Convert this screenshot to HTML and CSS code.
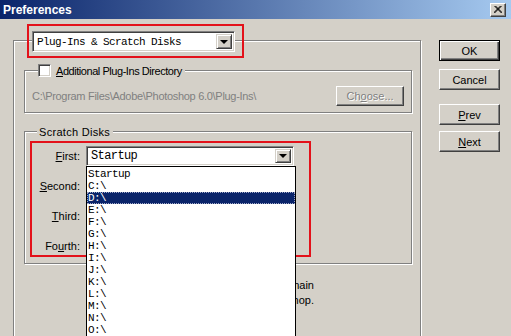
FILE: index.html
```html
<!DOCTYPE html>
<html>
	<head>
		<meta charset="UTF-8">
		<title>Preferences</title>
		<link rel="stylesheet" href="styles.css">
	</head>
	<body>
		<div id="window">
			<div class="titlebar">
				<span class="title">Preferences</span>
				<span class="close">
					<svg width="8" height="7" viewBox="0 0 8 7"><path d="M0.5 0 L7.5 7 M1.5 0 L8.5 7 M7.5 0 L0.5 7 M6.5 0 L-0.5 7" stroke="#000" stroke-width="1" fill="none" /></svg>
				</span>
			</div>
			<div class="client">
				<div class="main">
					<div class="mark pane-mark">
						<div class="combo pane-combo">
							<span class="combo-text">Plug-Ins &amp; Scratch Disks</span>
							<span class="combo-btn"><i></i></span>
						</div>
					</div>
					<div class="frame">
						<div class="group plugins">
							<div class="legend"><span class="check"></span><span class="check-label"><u>A</u>dditional Plug-Ins Directory</span></div>
							<div class="path-row">
								<span class="path">C:\Program Files\Adobe\Photoshop 6.0\Plug-Ins\</span>
								<span class="btn disabled">Ch<u>o</u>ose...</span>
							</div>
						</div>
						<div class="group disks">
							<div class="legend">Scratch Disks</div>
							<div class="mark disk-mark">
								<div class="disk-row first">
									<span class="disk-label"><u>F</u>irst:</span>
									<div class="combo disk-combo">
										<span class="combo-text">Startup</span>
										<span class="combo-btn"><i></i></span>
									</div>
									<ul class="droplist">
										<li>Startup</li>
										<li>C:\</li>
										<li class="selected">D:\</li>
										<li>E:\</li>
										<li>F:\</li>
										<li>G:\</li>
										<li>H:\</li>
										<li>I:\</li>
										<li>J:\</li>
										<li>K:\</li>
										<li>L:\</li>
										<li>M:\</li>
										<li>N:\</li>
										<li>O:\</li>
									</ul>
								</div>
								<div class="disk-row">
									<span class="disk-label"><u>S</u>econd:</span>
									<div class="combo disk-combo"><span class="combo-text"></span><span class="combo-btn"><i></i></span></div>
								</div>
								<div class="disk-row">
									<span class="disk-label"><u>T</u>hird:</span>
									<div class="combo disk-combo"><span class="combo-text"></span><span class="combo-btn"><i></i></span></div>
								</div>
								<div class="disk-row">
									<span class="disk-label">Fo<u>u</u>rth:</span>
									<div class="combo disk-combo"><span class="combo-text"></span><span class="combo-btn"><i></i></span></div>
								</div>
							</div>
						</div>
						<div class="note">
							Note: Scratch disks will remain<br>
							in use until you quit Photoshop.
						</div>
					</div>
				</div>
				<div class="buttons">
					<span class="btn default">OK</span>
					<span class="btn">Cancel</span>
					<span class="btn prev"><u>P</u>rev</span>
					<span class="btn"><u>N</u>ext</span>
				</div>
			</div>
		</div>
	</body>
</html>
```

FILE: styles.css
```css
*{margin: 0;padding: 0;box-sizing: border-box;}
li{list-style: none;}
body{background: #d4d0c8;font-family: "Liberation Sans", Arial, sans-serif;font-size: 11px;color: #000;}
#window{width: 511px;height: 336px;overflow: hidden;background: #d4d0c8;}

.titlebar{height: 19px;display: flex;align-items: center;justify-content: space-between;padding: 0 5px 0 3px;background: linear-gradient(to right, #0a246a, #a6caf0);}
.title{color: #fff;font-weight: bold;font-size: 12px;}
.close{width: 16px;height: 14px;display: flex;align-items: center;justify-content: center;background: #d4d0c8;border: 1px solid;border-color: #fff #404040 #404040 #fff;box-shadow: inset -1px -1px 0 #808080;}

.client{display: flex;}
.main{width: 430px;padding-left: 13px;}

.mark{border: 2px solid #e3111a;position: relative;z-index: 1;}
.pane-mark{width: 217px;height: 34px;margin: 5px 0 0 14px;padding: 5px 0 0 3px;}

.combo{display: flex;align-items: center;background: #fff;border: 1px solid;border-color: #808080 #fff #fff #808080;box-shadow: inset 1px 1px 0 #404040, inset -1px -1px 0 #d4d0c8;padding: 2px;}
.combo-text{flex: 1;font-family: "Liberation Mono", monospace;font-size: 11px;letter-spacing: -0.6px;padding-left: 2px;}
.combo-btn{width: 16px;height: 100%;display: flex;align-items: center;justify-content: center;background: #d4d0c8;border: 1px solid;border-color: #d4d0c8 #404040 #404040 #d4d0c8;box-shadow: inset 1px 1px 0 #fff, inset -1px -1px 0 #808080;}
.combo-btn i{width: 0;height: 0;border-left: 4px solid transparent;border-right: 4px solid transparent;border-top: 4px solid #000;}
.pane-combo{width: 203px;height: 21px;}

.frame{height: 320px;margin-top: -18px;border: 1px solid #808080;box-shadow: inset 1px 1px 0 #fff, 1px 1px 0 #fff;width: 408px;padding: 0 8px 0 10px;}

.group{border: 1px solid #808080;box-shadow: inset 1px 1px 0 #fff, 1px 1px 0 #fff;}
.legend{display: flex;align-items: center;gap: 5px;align-self: flex-start;width: max-content;height: 13px;background: #d4d0c8;padding: 0 3px 0 0;}
.plugins{margin-top: 29px;padding: 0 7px 6px 7px;}
.plugins .legend{margin: -7px 0 0 6px;}
.check{width: 13px;height: 13px;background: #fff;border: 1px solid;border-color: #808080 #fff #fff #808080;box-shadow: inset 1px 1px 0 #404040, inset -1px -1px 0 #d4d0c8;}
.check-label{letter-spacing: -0.45px;}
.path-row{display: flex;align-items: center;justify-content: space-between;margin-top: 9px;}
.path{color: #808080;letter-spacing: -0.3px;}

.btn{display: flex;align-items: center;justify-content: center;height: 20px;background: #d4d0c8;border: 1px solid;border-color: #fff #404040 #404040 #fff;box-shadow: inset -1px -1px 0 #808080;}
.disabled{width: 68px;color: #808080;text-shadow: 1px 1px 0 #fff;}

.disks{margin-top: 18px;padding: 0 0 6px 0;}
.disks .legend{margin: -7px 0 0 12px;padding: 0 3px 0 2px;letter-spacing: 0.3px;}
.disk-mark{width: 281px;height: 116px;margin: 3px 0 0 5px;padding-top: 3px;display: flex;flex-direction: column;gap: 10px;}
.disk-row{display: flex;align-items: center;gap: 6px;position: relative;}
.disk-label{width: 48px;text-align: right;}
.disk-combo{width: 208px;height: 20px;}
.disk-combo .combo-text{font-size: 12px;}

.droplist{position: absolute;left: 54px;top: 20px;width: 210px;height: 200px;background: #fff;border: 1px solid #000;z-index: 2;font-family: "Liberation Mono", monospace;font-size: 11px;letter-spacing: -0.6px;padding-top: 1px;}
.droplist li{height: 12px;line-height: 12px;padding-left: 1px;}
.droplist .selected{background: #0a246a;color: #fff;outline: 1px dotted #a0a8c8;outline-offset: -1px;}

.note{margin-top: 14px;width: 290px;text-align: right;line-height: 15px;}

.buttons{display: flex;flex-direction: column;width: 61px;margin-left: 9px;padding-top: 21px;}
.buttons .btn{height: 21px;margin-bottom: 8px;}
.buttons .default{border: 1px solid #000;box-shadow: inset 1px 1px 0 #fff, inset -1px -1px 0 #404040, inset -2px -2px 0 #808080;}
.buttons .prev{margin-top: 6px;margin-bottom: 6px;}
```
